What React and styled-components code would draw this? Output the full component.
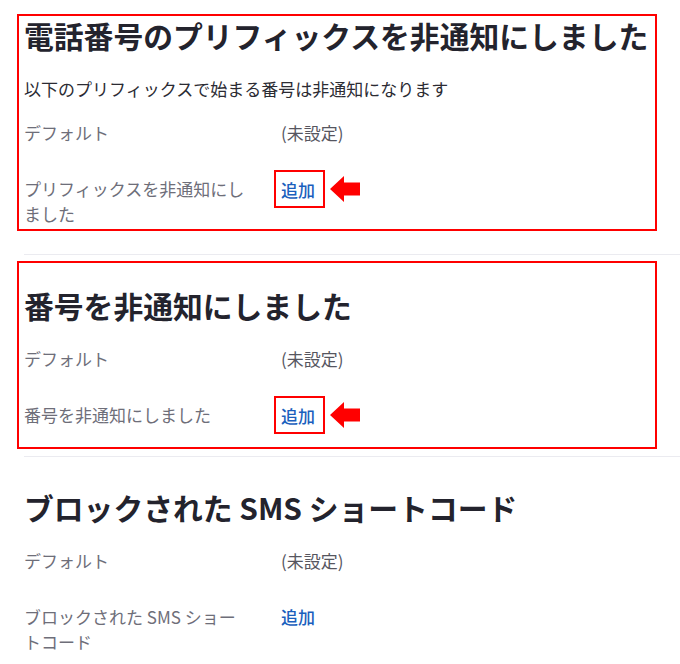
import React from 'react';
import styled, {createGlobalStyle} from 'styled-components';

const GlobalStyle = createGlobalStyle`
    body {
        margin: 0;
        background: #ffffff;
        font-family: 'Noto Sans CJK JP', 'Noto Sans', sans-serif;
        overflow: hidden;
    }
`

const Page = styled.div`
    width: 656px;
    padding-left: 24px;
`

const Section = styled.section`
    position: relative;
    padding: 30px 0 28px;
    border-bottom: 1px solid #ebebf0;
    &:first-child {
        padding-top: 15px;
    }
    &:last-child {
        border-bottom: none;
    }
`

// red annotation frame drawn over a whole section
const Frame = styled.div`
    position: absolute;
    top: ${p => p.$top}px;
    bottom: ${p => p.$bottom}px;
    left: -7px;
    right: 23px;
    border: 2px solid #ff0000;
    pointer-events: none;
`

const Title = styled.h2`
    margin: 0 0 21px;
    font-size: 29.8px;
    line-height: 40px;
    font-weight: 700;
    color: #23232d;
    letter-spacing: 0;
    white-space: nowrap;
`

const Description = styled.p`
    margin: 0 0 19px;
    font-size: 17px;
    line-height: 25px;
    color: #2b2b33;
`

const Rows = styled.div`
    display: flex;
    flex-direction: column;
    gap: 31px;
`

const Row = styled.div`
    display: grid;
    grid-template-columns: 257px 1fr;
    align-items: start;
    font-size: 17px;
    line-height: 25px;
`

const Label = styled.div`
    max-width: 226px;
    color: #6e6e79;
`

const Value = styled.div`
    display: flex;
    align-items: center;
    color: #56565f;
`

const AddLink = styled.a`
    position: relative;
    display: inline-block;
    color: #1b5fbd;
    font-weight: 500;
    text-decoration: none;
    cursor: pointer;
    &::after {
        content: '';
        display: ${p => p.$marked ? 'block' : 'none'};
        position: absolute;
        top: -7px;
        bottom: -6px;
        left: -7px;
        right: -10px;
        border: 2px solid #ff0000;
    }
`

const Arrow = styled.svg`
    margin-left: 15px;
    flex: none;
`

const PointerArrow = () => (
    <Arrow width="30" height="26" viewBox="0 0 30 26">
        <path d="M0 13 L14 0 L14 6.5 L30 6.5 L30 19.5 L14 19.5 L14 26 Z" fill="#ff0000" />
    </Arrow>
)

const sections = [
    {
        title: '電話番号のプリフィックスを非通知にしました',
        description: '以下のプリフィックスで始まる番号は非通知になります',
        label: 'プリフィックスを非通知にしました',
        frame: {top: 14, bottom: 23},
        marked: true,
    },
    {
        title: '番号を非通知にしました',
        label: '番号を非通知にしました',
        frame: {top: 6, bottom: 7},
        marked: true,
    },
    {
        title: 'ブロックされた SMS ショートコード',
        label: 'ブロックされた SMS ショートコード',
    },
]

const App = () => {
    return (
        <Page>
            <GlobalStyle />
            {sections.map((s, idx) => (
                <Section key={idx}>
                    {s.frame && <Frame $top={s.frame.top} $bottom={s.frame.bottom} />}
                    <Title>{s.title}</Title>
                    {s.description && <Description>{s.description}</Description>}
                    <Rows>
                        <Row>
                            <Label>デフォルト</Label>
                            <Value>(未設定)</Value>
                        </Row>
                        <Row>
                            <Label>{s.label}</Label>
                            <Value>
                                <AddLink $marked={s.marked}>追加</AddLink>
                                {s.marked && <PointerArrow />}
                            </Value>
                        </Row>
                    </Rows>
                </Section>
            ))}
        </Page>
    )
}

export default App;
